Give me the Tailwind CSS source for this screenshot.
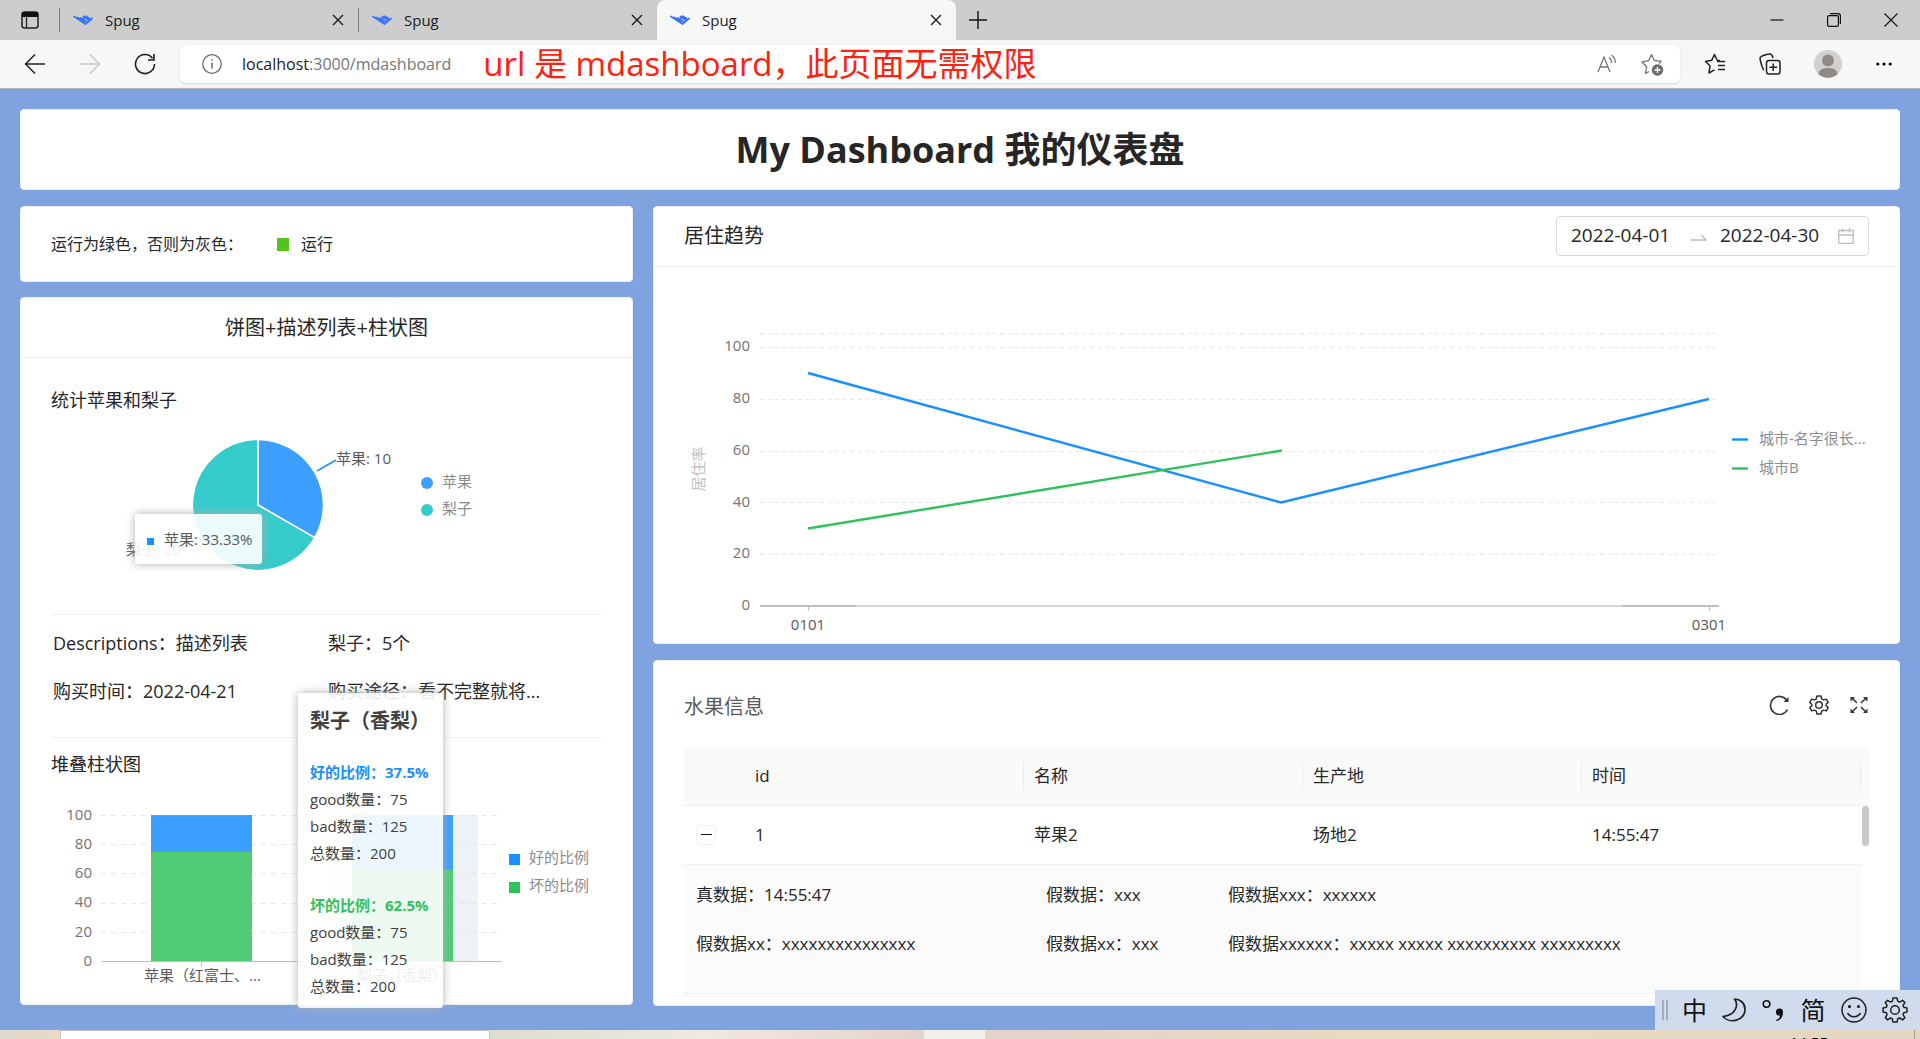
<!DOCTYPE html>
<html lang="zh-CN">
<head>
<meta charset="utf-8">
<title>Spug</title>
<script src="https://cdn.jsdelivr.net/npm/@tailwindcss/browser@4"></script>
</head>
<body class="flex min-h-screen flex-col overflow-x-hidden bg-[#7ea3df] font-['Open_Sans','Noto_Sans_CJK_SC',sans-serif] text-[17px] leading-7 text-[#262626]">
<svg class="hidden">
  <symbol id="spug" viewBox="0 0 20 12"><path d="M1 2.500L12.500 10M4.500 3.500L11 7.500M8 4L14.500 8.500M10.500 2.500L16 6.500M12.500 10L19 4.500M11 4L13 2.200L17 5" fill="none" stroke="#3b74f5" stroke-width="1.800" stroke-linecap="round" stroke-linejoin="round"/></symbol>
  <symbol id="x" viewBox="0 0 12 12"><path d="M1 1L11 11M11 1L1 11" fill="none" stroke="currentColor" stroke-width="1.4"/></symbol>
</svg>

<header class="relative">
  <div class="flex h-10 items-stretch bg-[#cdcdcd] text-[15px] text-[#1b1b1b]">
    <button class="flex w-[59px] items-center justify-center" aria-label="标签操作菜单">
      <svg class="h-[18px] w-[18px]" viewBox="0 0 18 18"><rect x="1" y="1" width="16" height="16" rx="2.5" fill="none" stroke="#222" stroke-width="1.5"/><path d="M1 3.5A2.5 2.5 0 013.500 1H14.500A2.500 2.500 0 0117 3.500V6H1Z" fill="#111"/><path d="M5.500 6V17" stroke="#222" stroke-width="1.300"/></svg>
    </button>
    <div class="my-2 w-px bg-[#7d7d7d]"></div>
    <div class="flex w-[298px] items-center pr-[14px] pl-[13px]"><svg class="h-3 w-5"><use href="#spug"/></svg><span class="ml-3 flex-1">Spug</span><button aria-label="关闭标签页"><svg class="h-3 w-3"><use href="#x"/></svg></button></div>
    <div class="my-2 w-px bg-[#7d7d7d]"></div>
    <div class="flex w-[298px] items-center pr-[14px] pl-[13px]"><svg class="h-3 w-5"><use href="#spug"/></svg><span class="ml-3 flex-1">Spug</span><button aria-label="关闭标签页"><svg class="h-3 w-3"><use href="#x"/></svg></button></div>
    <div class="flex w-[299px] items-center rounded-t-lg bg-[#f7f7f7] pr-[14px] pl-[13px]"><svg class="h-3 w-5"><use href="#spug"/></svg><span class="ml-3 flex-1">Spug</span><button aria-label="关闭标签页"><svg class="h-3 w-3"><use href="#x"/></svg></button></div>
    <button class="ml-[13px]" aria-label="新建标签页"><svg class="h-[18px] w-[18px]" viewBox="0 0 18 18"><path d="M9 0V18M0 9H18" stroke="#111" stroke-width="1.400"/></svg></button>
    <div class="ml-auto flex items-center gap-[43px] pr-[22px]">
      <button aria-label="最小化"><svg class="h-[14px] w-[14px]" viewBox="0 0 14 14"><path d="M0.500 7H13.500" stroke="#111" stroke-width="1.200"/></svg></button>
      <button aria-label="还原"><svg class="h-[14px] w-[14px]" viewBox="0 0 14 14"><rect x="0.600" y="2.600" width="10.800" height="10.800" rx="1.500" fill="none" stroke="#111" stroke-width="1.200"/><path d="M3 0.600H11A2.400 2.400 0 0113.400 3V11" fill="none" stroke="#111" stroke-width="1.200"/></svg></button>
      <button aria-label="关闭"><svg class="h-[14px] w-[14px]" viewBox="0 0 14 14"><path d="M0.500 0.500L13.500 13.500M13.500 0.500L0.500 13.500" stroke="#111" stroke-width="1.100"/></svg></button>
    </div>
  </div>
  <div class="flex h-[49px] items-center border-b border-[#b9b9b9] bg-[#f7f7f7] pr-7">
    <button class="ml-6" aria-label="后退"><svg class="h-[22px] w-[22px]" viewBox="0 0 22 22"><path d="M21 11H2M11 1.500L1.500 11L11 20.500" fill="none" stroke="#222" stroke-width="1.500"/></svg></button>
    <button class="ml-[33px]" aria-label="前进"><svg class="h-[22px] w-[22px]" viewBox="0 0 22 22"><path d="M1 11H20M11 1.500L20.500 11L11 20.500" fill="none" stroke="#c9c9c9" stroke-width="1.500"/></svg></button>
    <button class="ml-[33px]" aria-label="刷新"><svg class="h-[22px] w-[22px]" viewBox="0 0 22 22"><path d="M20.500 11A9.500 9.500 0 1118.500 5.200M20 1V7H14" fill="none" stroke="#222" stroke-width="1.600"/></svg></button>
    <div class="ml-6 flex h-[38px] min-w-0 flex-1 items-center rounded-md bg-white pr-4 pl-[22px] shadow-sm">
      <svg class="h-5 w-5 shrink-0" viewBox="0 0 20 20"><circle cx="10" cy="10" r="9.300" fill="none" stroke="#6d6d6d" stroke-width="1.300"/><path d="M10 8.500V14.500M10 5.200V6.800" stroke="#6d6d6d" stroke-width="1.500"/></svg>
      <a href="#" class="ml-5 whitespace-nowrap text-[16px] text-[#767676]"><span class="text-[#1b1b1b]">localhost</span>:3000/mdashboard</a>
      <span class="ml-8 whitespace-nowrap text-[33px] leading-9 text-[#ff2010]">url 是 mdashboard，此页面无需权限</span>
      <button class="ml-auto" aria-label="大声朗读"><svg class="h-5 w-5" viewBox="0 0 20 20"><path d="M1 18L7 3L13 18M3 13H11M12 3.500A6 6 0 0114.500 9M14.500 1A10 10 0 0118.500 9" fill="none" stroke="#777" stroke-width="1.300"/></svg></button>
      <button class="ml-6" aria-label="收藏"><svg class="h-[23px] w-[23px]" viewBox="0 0 23 23"><path d="M10.500 1.500L13.200 7.300L20.500 8.300M8 18.500L4.500 20.500L5.600 13.800L1 9L7.600 7.600L10.500 1.500M20.500 8.300L18 10.500" fill="none" stroke="#777" stroke-width="1.300" stroke-linejoin="round"/><circle cx="16.500" cy="17" r="5.800" fill="#6d6d6d"/><path d="M16.500 14V20M13.500 17H19.500" stroke="#fff" stroke-width="1.300"/></svg></button>
    </div>
    <button class="ml-6" aria-label="收藏夹"><svg class="h-[22px] w-[22px]" viewBox="0 0 22 22"><path d="M16 7.800L13.200 7.300L10.500 1.500L7.700 7.300L1.500 8.500L6 12.800L5 20L10.500 16.800M13 8.500H21M14 12.500H21M14 16.500H21" fill="none" stroke="#222" stroke-width="1.500" stroke-linejoin="round"/></svg></button>
    <button class="ml-[33px]" aria-label="集锦"><svg class="h-[22px] w-[22px]" viewBox="0 0 22 22"><rect x="7.500" y="7.500" width="13.500" height="13.500" rx="2.500" fill="none" stroke="#222" stroke-width="1.500"/><path d="M14.200 10.500V18M10.500 14.200H18M5 17C3.500 16.500 1 7 1 5C1 3 9 1 11 1C13 1 13.500 3 14 5" fill="none" stroke="#222" stroke-width="1.500"/></svg></button>
    <button class="ml-[33px]" aria-label="个人资料"><svg class="h-7 w-7" viewBox="0 0 28 28"><circle cx="14" cy="14" r="14" fill="#d3d1cd"/><circle cx="14" cy="10.500" r="6" fill="#8f8a86"/><path d="M4.500 24C5 19.500 9 18 14 18S23 19.500 23.500 24A14 14 0 014.500 24Z" fill="#8f8a86"/></svg></button>
    <button class="ml-[34px]" aria-label="设置及其他"><svg class="h-4 w-4" viewBox="0 0 16 16"><circle cx="1.800" cy="8" r="1.600"/><circle cx="8" cy="8" r="1.600"/><circle cx="14.200" cy="8" r="1.600"/></svg></button>
  </div>
</header>

<main class="flex-1 px-5 pt-5 pb-6">
  <section class="rounded-sm border border-[#f0f0f0] bg-white py-4 text-center">
    <h1 class="text-[36px] leading-[47px] font-bold">My Dashboard 我的仪表盘</h1>
  </section>

  <div class="mt-4 grid grid-cols-[613fr_1247fr] items-start gap-5">
    <div class="flex min-w-0 flex-col gap-[15px]">
      <section class="flex h-[76px] items-center rounded-sm border border-[#f0f0f0] bg-white px-[30px] text-[16px]">
        <span>运行为绿色，否则为灰色：</span>
        <span class="ml-[34px] h-[13px] w-3 bg-[#52c41a]"></span>
        <span class="ml-3">运行</span>
      </section>

      <section class="relative h-[708px] rounded-sm border border-[#f0f0f0] bg-white">
        <h2 class="h-[60px] border-b border-[#f0f0f0] text-center text-[20px] leading-[60px]">饼图+描述列表+柱状图</h2>
        <div class="px-[30px]">
          <h3 class="mt-7 text-[18px]">统计苹果和梨子</h3>
          <svg class="mt-1 block w-full text-[15px]" viewBox="51 418 551 196">
            <path d="M258 505V439.500A65.500 65.500 0 01314.700 537.700Z" fill="#3ba0ff" stroke="#fff" stroke-width="1.500"/>
            <path d="M258 505L314.700 537.700A65.500 65.500 0 11258 439.500Z" fill="#36cbcb" stroke="#fff" stroke-width="1.500"/>
            <path d="M317 471L336 460" stroke="#1890ff" stroke-width="1.500"/>
            <path d="M180 550L200 539" stroke="#36cbcb" stroke-width="1.500"/>
            <text x="336" y="464" fill="#595959">苹果: 10</text>
            <text x="126" y="555" fill="#595959">梨子: 20</text>
            <circle cx="427" cy="483" r="6" fill="#3ba0ff"/><circle cx="427" cy="510" r="6" fill="#36cbcb"/>
            <text x="442" y="487" fill="#8c8c8c">苹果</text><text x="442" y="514" fill="#8c8c8c">梨子</text>
          </svg>
          <dl class="grid h-[124px] grid-cols-[275px_1fr] content-start gap-y-5 border-y border-[#f0f0f0] pt-[14px] pl-[2px] text-[18px]">
            <div class="flex"><dt>Descriptions：</dt><dd>描述列表</dd></div>
            <div class="flex"><dt>梨子：</dt><dd>5个</dd></div>
            <div class="flex"><dt>购买时间：</dt><dd>2022-04-21</dd></div>
            <div class="flex"><dt>购买途径：</dt><dd>看不完整就将...</dd></div>
          </dl>
          <h3 class="mt-3 text-[18px]">堆叠柱状图</h3>
          <svg class="block w-full text-[15px]" viewBox="51 777 551 216">
            <path d="M101 814.500H502M101 843.500H502M101 872.500H502M101 902.500H502M101 931.500H502" stroke="#e8e8e8" stroke-dasharray="5 5"/>
            <rect x="327" y="814" width="151" height="146" fill="#ccd6ec" opacity=".35"/>
            <path d="M101 960.500H502M201.500 960V966" stroke="#bfbfbf"/>
            <rect x="151" y="814" width="101" height="37" fill="#3ba0ff"/><rect x="151" y="851" width="101" height="109" fill="#50cc75"/>
            <rect x="352" y="814" width="101" height="55" fill="#3ba0ff"/><rect x="352" y="869" width="101" height="91" fill="#50cc75"/>
            <g text-anchor="end" fill="#737373"><text x="92" y="819">100</text><text x="92" y="848">80</text><text x="92" y="877">60</text><text x="92" y="906">40</text><text x="92" y="936">20</text><text x="92" y="965">0</text></g>
            <text x="144" y="980" fill="#595959">苹果（红富士、...</text><text x="357" y="980" fill="#595959">梨子（香梨）</text>
            <rect x="509" y="853" width="11" height="11" fill="#1890ff"/><rect x="509" y="881" width="11" height="11" fill="#2fc25b"/>
            <text x="529" y="862" fill="#8c8c8c">好的比例</text><text x="529" y="890" fill="#8c8c8c">坏的比例</text>
          </svg>
        </div>
        <div class="absolute top-[216px] left-[114px] flex h-[50px] w-[127px] items-center rounded-[3px] bg-white/90 pl-3 text-[15px] whitespace-nowrap text-[#595959] shadow-[0_0_10px_#aeaeae]"><span class="mt-1 mr-[10px] h-[7px] w-[7px] bg-[#1890ff]"></span>苹果: 33.33%</div>
        <div class="absolute top-[395px] left-[277px] h-[315px] w-[145px] rounded-[3px] bg-white/90 px-3 pt-[14px] text-[15px] leading-[27px] whitespace-nowrap text-[#404040] shadow-[0_0_10px_#aeaeae]">
          <h4 class="mb-6 text-[20px] leading-7 font-bold">梨子（香梨）</h4>
          <p class="font-bold text-[#1890ff]">好的比例：37.5%</p><p>good数量：75</p><p>bad数量：125</p><p>总数量：200</p>
          <p class="mt-[25px] font-bold text-[#2fc25b]">坏的比例：62.5%</p><p>good数量：75</p><p>bad数量：125</p><p>总数量：200</p>
        </div>
      </section>
    </div>

    <div class="flex min-w-0 flex-col gap-4">
      <section class="rounded-sm border border-[#f0f0f0] bg-white">
        <div class="flex h-[60px] items-center justify-between border-b border-[#f0f0f0] px-[30px] pb-[2px]">
          <h2 class="text-[20px]">居住趋势</h2>
          <div class="flex h-10 w-[313px] items-center rounded-sm border border-[#d9d9d9] pr-[14px] pl-[14px] text-[19px] leading-7">
            <input class="w-[120px] pb-px" aria-label="开始日期" value="2022-04-01">
            <svg class="h-4 w-4" viewBox="0 0 16 16"><path d="M0 12H15L10.500 7" fill="none" stroke="#bfbfbf" stroke-width="1.300"/></svg>
            <input class="ml-[13px] w-[112px] pb-px" aria-label="结束日期" value="2022-04-30">
            <svg class="ml-auto h-4 w-4" viewBox="0 0 16 16"><path d="M0.700 2.500H15.300V15.300H0.700ZM0.700 7H15.300M4.500 0V4.500M11.500 0V4.500" fill="none" stroke="#bfbfbf" stroke-width="1.300"/></svg>
          </div>
        </div>
        <svg class="block w-full text-[15px]" viewBox="654 267 1245 376">
          <path d="M760 333.500H1717M760 347.500H1717M760 399.500H1717M760 451.500H1717M760 502.500H1717M760 554.500H1717" stroke="#e8e8e8" stroke-dasharray="4 3.500"/>
          <path d="M760 606H1719" stroke="#d6d6d6" stroke-width="2"/><path d="M760 606H856M1622 606H1719" stroke="#bfbfbf" stroke-width="2"/>
          <path d="M808.500 606V611M1709.500 606V611" stroke="#bfbfbf"/>
          <path d="M808 373L1281 502.500L1709 399" fill="none" stroke="#1890ff" stroke-width="2.400"/>
          <path d="M808 528.500L1282 450.500" fill="none" stroke="#2fc25b" stroke-width="2.400"/>
          <g text-anchor="end" fill="#737373"><text x="750" y="351">100</text><text x="750" y="403">80</text><text x="750" y="455">60</text><text x="750" y="507">40</text><text x="750" y="558">20</text><text x="750" y="610">0</text></g>
          <g text-anchor="middle" fill="#595959"><text x="808" y="630">0101</text><text x="1709" y="630">0301</text></g>
          <text transform="translate(704 469) rotate(-90)" text-anchor="middle" fill="#bfbfbf">居住率</text>
          <path d="M1732 439.500H1748" stroke="#1890ff" stroke-width="2.400"/><path d="M1732 468.500H1748" stroke="#2fc25b" stroke-width="2.400"/>
          <text x="1759" y="444" fill="#8c8c8c">城市-名字很长...</text><text x="1759" y="473" fill="#8c8c8c">城市B</text>
        </svg>
      </section>

      <section class="h-[346px] rounded-sm border border-[#f0f0f0] bg-white px-[30px] pt-8">
        <div class="flex items-center">
          <h2 class="flex-1 text-[20px] text-[#595959]">水果信息</h2>
          <div class="flex gap-5 pb-1">
            <button aria-label="刷新"><svg class="h-5 w-5" viewBox="0 0 20 20"><path d="M18.500 14.500A9 9 0 1118 5.500" fill="none" stroke="#333" stroke-width="1.600"/><path d="M19.500 2V7H14.500Z" fill="#333"/></svg></button>
            <button aria-label="列设置"><svg class="h-5 w-5" viewBox="0 0 20 20"><path d="M8 1H12L12.700 3.800L14.600 4.900L17.300 4.100L19.200 7.400L17.200 9.200V10.800L19.200 12.600L17.300 15.900L14.600 15.100L12.700 16.200L12 19H8L7.300 16.200L5.400 15.100L2.700 15.900L0.800 12.600L2.800 10.800V9.200L0.800 7.400L2.700 4.100L5.400 4.900L7.300 3.800Z" fill="none" stroke="#333" stroke-width="1.500" stroke-linejoin="round"/><circle cx="10" cy="10" r="3.300" fill="none" stroke="#333" stroke-width="1.500"/></svg></button>
            <button aria-label="全屏"><svg class="h-5 w-5" viewBox="0 0 20 20"><path d="M3 3L8 8M17 3L12 8M3 17L8 12M17 17L12 12" stroke="#333" stroke-width="1.500"/><path d="M1.500 2H6L1.500 6.500ZM18.500 2V6.500L14 2ZM1.500 18V13.500L6 18ZM18.500 18H14L18.500 13.500Z" fill="#333"/></svg></button>
          </div>
        </div>
        <div class="relative mt-[26px]">
          <table class="w-full table-fixed border-collapse text-left">
            <thead class="bg-[#fafafa]">
              <tr class="h-[58px] border-b border-[#f0f0f0]">
                <th class="w-[61px]"></th>
                <th class="w-[279px] p-0 font-normal"><div class="border-r border-[#ececec] pl-[10px]">id</div></th>
                <th class="w-[279px] p-0 font-normal"><div class="border-r border-[#ececec] pl-[10px]">名称</div></th>
                <th class="w-[279px] p-0 font-normal"><div class="border-r border-[#ececec] pl-[10px]">生产地</div></th>
                <th class="w-[279px] p-0 font-normal"><div class="border-r border-[#ececec] pl-[10px]">时间</div></th>
                <th></th>
              </tr>
            </thead>
            <tbody>
              <tr class="h-[59px]">
                <td class="border-b border-[#f0f0f0] pl-3"><button class="flex h-5 w-5 items-center justify-center rounded-sm border border-[#f0f0f0]" aria-label="收起行"><span class="h-px w-[11px] bg-[#111]"></span></button></td>
                <td class="border-b border-[#f0f0f0] pl-[10px]">1</td><td class="border-b border-[#f0f0f0] pl-[10px]">苹果2</td><td class="border-b border-[#f0f0f0] pl-[10px]">场地2</td><td class="border-b border-[#f0f0f0] pl-[10px]">14:55:47</td><td></td>
              </tr>
              <tr class="h-[129px]">
                <td colspan="5" class="border-b border-[#f0f0f0] bg-[#fbfbfb] pt-4 pl-3 align-top">
                  <dl class="grid grid-cols-[350px_182px_1fr] gap-y-[21px]">
                    <div class="flex"><dt>真数据：</dt><dd>14:55:47</dd></div><div class="flex"><dt>假数据：</dt><dd>xxx</dd></div><div class="flex"><dt>假数据xxx：</dt><dd>xxxxxx</dd></div>
                    <div class="flex"><dt>假数据xx：</dt><dd>xxxxxxxxxxxxxxx</dd></div><div class="flex"><dt>假数据xx：</dt><dd>xxx</dd></div><div class="flex"><dt>假数据xxxxxx：</dt><dd>xxxxx xxxxx xxxxxxxxxx xxxxxxxxx</dd></div>
                  </dl>
                </td><td></td>
              </tr>
            </tbody>
          </table>
          <div class="absolute top-[59px] right-0 h-10 w-[7px] rounded-full bg-[#c9c9c9]"></div>
        </div>
      </section>
    </div>
  </div>
</main>

<footer class="relative">
  <div class="absolute right-0 bottom-[9px] flex h-10 w-[265px] items-center bg-[#d0dcee] pl-[7px] text-[#111]">
    <span class="h-5 w-[6px] border-x-2 border-[#a3adbb]"></span>
    <div class="flex flex-1 items-center justify-between pr-3 pl-[14px] text-[25px]">
      <span>中</span>
      <svg class="h-6 w-6" viewBox="0 0 24 24"><path d="M12.500 1C17 7 14 17 1 18.500C7 26 23 23 23 11C23 5 18 1 12.500 1Z" fill="none" stroke="#222" stroke-width="1.700" stroke-linejoin="round"/></svg>
      <svg class="h-6 w-6" viewBox="-2 0 24 24"><circle cx="3.500" cy="6" r="3.300" fill="none" stroke="#111" stroke-width="1.600"/><path d="M13 22C16 21 17 19.500 17 17.500A3.500 3.500 0 1120 14C20 18.500 18 22 13.500 23Z" fill="#111"/></svg>
      <span>简</span>
      <svg class="h-[26px] w-[26px]" viewBox="0 0 26 26"><circle cx="13" cy="13" r="12" fill="none" stroke="#222" stroke-width="1.600"/><circle cx="8.500" cy="9.500" r="1.500"/><circle cx="17.500" cy="9.500" r="1.500"/><path d="M6.500 16C9.500 21 16.500 21 19.500 16" fill="none" stroke="#222" stroke-width="1.600"/></svg>
      <svg class="h-[26px] w-[26px]" viewBox="0 0 26 26"><path d="M11 1H15L15.800 4.300L17.700 5.100L20.600 3.300L22.900 5.600L21 8.500L21.800 10.300L25 11V15L21.800 15.800L21 17.700L22.900 20.600L20.600 22.900L17.700 21L15.800 21.800L15 25H11L10.300 21.800L8.500 21L5.600 22.900L3.300 20.600L5.100 17.700L4.300 15.800L1 15V11L4.300 10.300L5.100 8.500L3.300 5.600L5.600 3.300L8.500 5.100L10.300 4.300Z" fill="none" stroke="#222" stroke-width="1.500" stroke-linejoin="round"/><circle cx="13" cy="13" r="4.300" fill="none" stroke="#222" stroke-width="1.500"/></svg>
    </div>
  </div>
  <div class="flex h-[9px] overflow-hidden">
    <div class="w-[60px] bg-linear-to-r from-[#ded9cd] to-[#e8dac6]"></div>
    <div class="w-[430px] border border-b-0 border-[#c8c4bc] bg-white"></div>
    <div class="w-[434px] bg-linear-to-r from-[#dedcd0] via-[#efe9e2] to-[#e3d3cc]"></div>
    <div class="w-[61px] bg-[#f4eeeb]"></div>
    <div class="flex flex-1 justify-end bg-linear-to-r from-[#e3d3cc] via-[#e8ddc0] to-[#e3d6c3] pr-[5px]"><time class="mr-[86px] pt-1 text-[15px] leading-4 text-black">14:55</time><div class="w-px bg-[#a89f90]"></div></div>
  </div>
</footer>
</body>
</html>
